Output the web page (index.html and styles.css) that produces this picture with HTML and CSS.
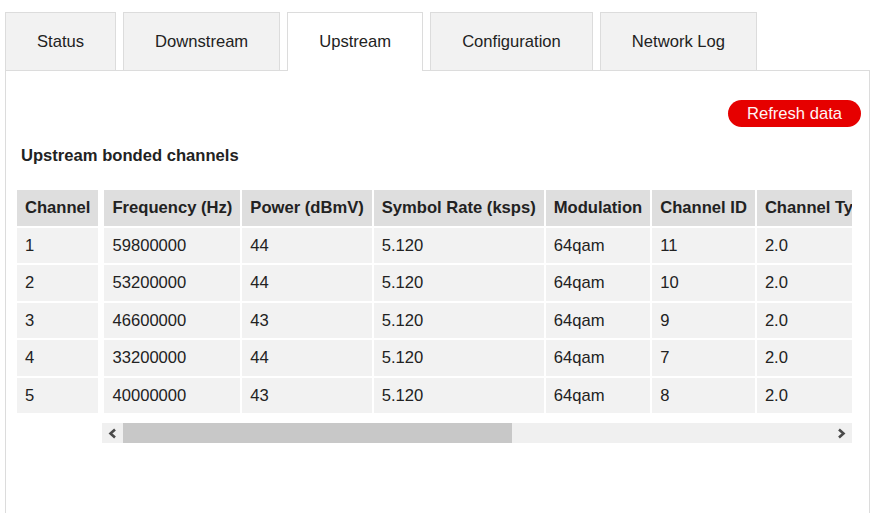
FILE: index.html
```html
<!DOCTYPE html>
<html lang="en">
<head>
    <meta charset="UTF-8">
    <meta name="viewport" content="width=device-width, initial-scale=1.0">
    <title>Upstream</title>
    <link rel="stylesheet" href="styles.css">
</head>
<body>
    <div class="page">
        <ul class="tabs">
            <li class="tab">Status</li>
            <li class="tab">Downstream</li>
            <li class="tab active">Upstream</li>
            <li class="tab">Configuration</li>
            <li class="tab">Network Log</li>
        </ul>

        <div class="panel">
            <div class="actions">
                <button class="refresh">Refresh data</button>
            </div>

            <h2>Upstream bonded channels</h2>

            <div class="channels">
                <table class="fixed-col">
                    <tr><th>Channel</th></tr>
                    <tr><td>1</td></tr>
                    <tr><td>2</td></tr>
                    <tr><td>3</td></tr>
                    <tr><td>4</td></tr>
                    <tr><td>5</td></tr>
                </table>

                <div class="scroll-area">
                    <div class="scroll-view">
                        <table>
                            <tr>
                                <th>Frequency (Hz)</th>
                                <th>Power (dBmV)</th>
                                <th>Symbol Rate (ksps)</th>
                                <th>Modulation</th>
                                <th>Channel ID</th>
                                <th>Channel Type</th>
                            </tr>
                            <tr><td>59800000</td><td>44</td><td>5.120</td><td>64qam</td><td>11</td><td>2.0</td></tr>
                            <tr><td>53200000</td><td>44</td><td>5.120</td><td>64qam</td><td>10</td><td>2.0</td></tr>
                            <tr><td>46600000</td><td>43</td><td>5.120</td><td>64qam</td><td>9</td><td>2.0</td></tr>
                            <tr><td>33200000</td><td>44</td><td>5.120</td><td>64qam</td><td>7</td><td>2.0</td></tr>
                            <tr><td>40000000</td><td>43</td><td>5.120</td><td>64qam</td><td>8</td><td>2.0</td></tr>
                        </table>
                    </div>
                    <div class="scrollbar">
                        <span class="arrow">
                            <svg width="9" height="11" viewBox="0 0 9 11"><polyline points="7,1.5 2.5,5.5 7,9.5" fill="none" stroke="#4a4a4a" stroke-width="2.6"/></svg>
                        </span>
                        <span class="thumb"></span>
                        <span class="track"></span>
                        <span class="arrow">
                            <svg width="9" height="11" viewBox="0 0 9 11"><polyline points="2,1.5 6.5,5.5 2,9.5" fill="none" stroke="#4a4a4a" stroke-width="2.6"/></svg>
                        </span>
                    </div>
                </div>
            </div>
        </div>
    </div>
</body>
</html>
```

FILE: styles.css
```css
:root {
    --color-text: #222;
    --color-border: #dcdcdc;
    --color-tab: #f2f2f2;
    --color-red: #e60000;
}

body {
    font-family: Arial, 'Liberation Sans', sans-serif;
    font-size: 16.6px;
    color: var(--color-text);
    margin: 0;
    background: #fff;
}

.page {
    padding: 12px 7px 0 5px;
}

/* Tabs */
.tabs {
    display: flex;
    align-items: flex-end;
    list-style: none;
    margin: 0;
    padding: 0;
    gap: 7px;
}

.tab {
    height: 58px;
    line-height: 57px;
    padding: 0 31px;
    background: var(--color-tab);
    border: 1px solid var(--color-border);
    border-bottom: none;
    box-sizing: border-box;
    white-space: nowrap;
}

.tab.active {
    background: #fff;
    height: 59px;
    margin-bottom: -1px;
    position: relative;
    z-index: 1;
}

/* Panel */
.panel {
    border: 1px solid var(--color-border);
    border-bottom: none;
    padding: 29px 8px 0 9px;
    min-height: 420px;
}

.actions {
    display: flex;
    justify-content: flex-end;
}

.refresh {
    font-family: inherit;
    font-size: 16.6px;
    height: 27px;
    line-height: 27px;
    padding: 0 19px;
    border: none;
    border-radius: 14px;
    background: var(--color-red);
    color: #fff4f4;
    cursor: pointer;
}

h2 {
    font-size: 16.6px;
    line-height: 19px;
    margin: 19px 0 23px 6px;
}

/* Channel table */
.channels {
    display: flex;
    align-items: flex-start;
    gap: 2px;
    margin-right: 9px;
}

table {
    border-spacing: 2px;
    white-space: nowrap;
}

th, td {
    text-align: left;
    padding: 8px;
    line-height: 19.5px;
}

th {
    background: #dedede;
    font-weight: bold;
}

td {
    background: var(--color-tab);
}

.scroll-area {
    flex: 1;
    min-width: 0;
}

.scroll-view {
    overflow: hidden;
}

.scrollbar {
    display: flex;
    height: 20px;
    margin-top: 8px;
    background: #f0f0f0;
}

.arrow {
    width: 21px;
    display: flex;
    align-items: center;
    justify-content: center;
}

.thumb {
    width: 389px;
    background: #c8c8c8;
}

.track {
    flex: 1;
}
```
